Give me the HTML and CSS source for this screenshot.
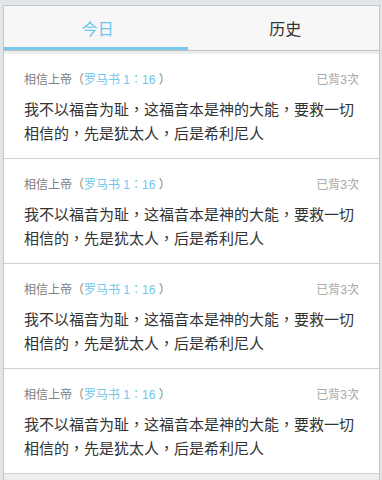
FILE: index.html
```html
<!DOCTYPE html>
<html lang="zh-TW">
<head>
    <meta charset="UTF-8">
    <meta name="viewport" content="width=device-width, initial-scale=1.0">
    <title>背经</title>
    <link rel="stylesheet" href="styles.css">
</head>
<body>
    <div class="container">
        <div class="tabs">
            <div class="tab active">今日</div>
            <div class="tab">历史</div>
        </div>

        <div class="verse-list">
            <div class="verse-item">
                <div class="verse-head">
                    <span class="verse-title">相信上帝（<span class="ref">罗马书 1：16</span> ）</span>
                    <span class="verse-count">已背3次</span>
                </div>
                <p class="verse-text">我不以福音为耻，这福音本是神的大能，要救一切相信的，先是犹太人，后是希利尼人</p>
            </div>

            <div class="verse-item">
                <div class="verse-head">
                    <span class="verse-title">相信上帝（<span class="ref">罗马书 1：16</span> ）</span>
                    <span class="verse-count">已背3次</span>
                </div>
                <p class="verse-text">我不以福音为耻，这福音本是神的大能，要救一切相信的，先是犹太人，后是希利尼人</p>
            </div>

            <div class="verse-item">
                <div class="verse-head">
                    <span class="verse-title">相信上帝（<span class="ref">罗马书 1：16</span> ）</span>
                    <span class="verse-count">已背3次</span>
                </div>
                <p class="verse-text">我不以福音为耻，这福音本是神的大能，要救一切相信的，先是犹太人，后是希利尼人</p>
            </div>

            <div class="verse-item">
                <div class="verse-head">
                    <span class="verse-title">相信上帝（<span class="ref">罗马书 1：16</span> ）</span>
                    <span class="verse-count">已背3次</span>
                </div>
                <p class="verse-text">我不以福音为耻，这福音本是神的大能，要救一切相信的，先是犹太人，后是希利尼人</p>
            </div>
        </div>
    </div>
</body>
</html>
```

FILE: styles.css
```css
html, body {
    margin: 0;
    height: 100%;
}
body {
    font-family: "Liberation Sans", "Noto Sans CJK TC", sans-serif;
    background: #e2e6e9;
    padding: 5px 2px 0 3px;
    box-sizing: border-box;
    overflow: hidden;
}
.container {
    width: 377px;
    box-sizing: border-box;
    border: 1px solid #c4c4c4;
    border-bottom: none;
    background: #eeeeee;
    min-height: 480px;
}
.tabs {
    display: flex;
    height: 44px;
    background: #f7f7f7;
    border-bottom: 1px solid #c2c2c2;
    position: relative;
}
.tab {
    flex: 1;
    display: flex;
    align-items: center;
    justify-content: center;
    font-size: 16px;
    color: #333;
    padding-bottom: 1px;
}
.tab.active {
    color: #6fc6ec;
}
.tab.active::after {
    content: "";
    position: absolute;
    left: 0;
    bottom: 0;
    width: 184px;
    height: 3px;
    background: #78c9ea;
}
.verse-list {
    margin-top: 3px;
    background: #fff;
}
.verse-item {
    padding: 17px 20px 0 20px;
    height: 87px;
    border-bottom: 1px solid #d0d0d0;
}
.verse-head {
    display: flex;
    justify-content: space-between;
    align-items: center;
    font-size: 12px;
    line-height: 18px;
}
.verse-title {
    color: #808080;
}
.verse-title .ref {
    color: #6fc6ec;
}
.verse-count {
    color: #a8a8a8;
}
.verse-text {
    margin: 9px 0 0 0;
    font-size: 15px;
    line-height: 24px;
    color: #333;
}
```
